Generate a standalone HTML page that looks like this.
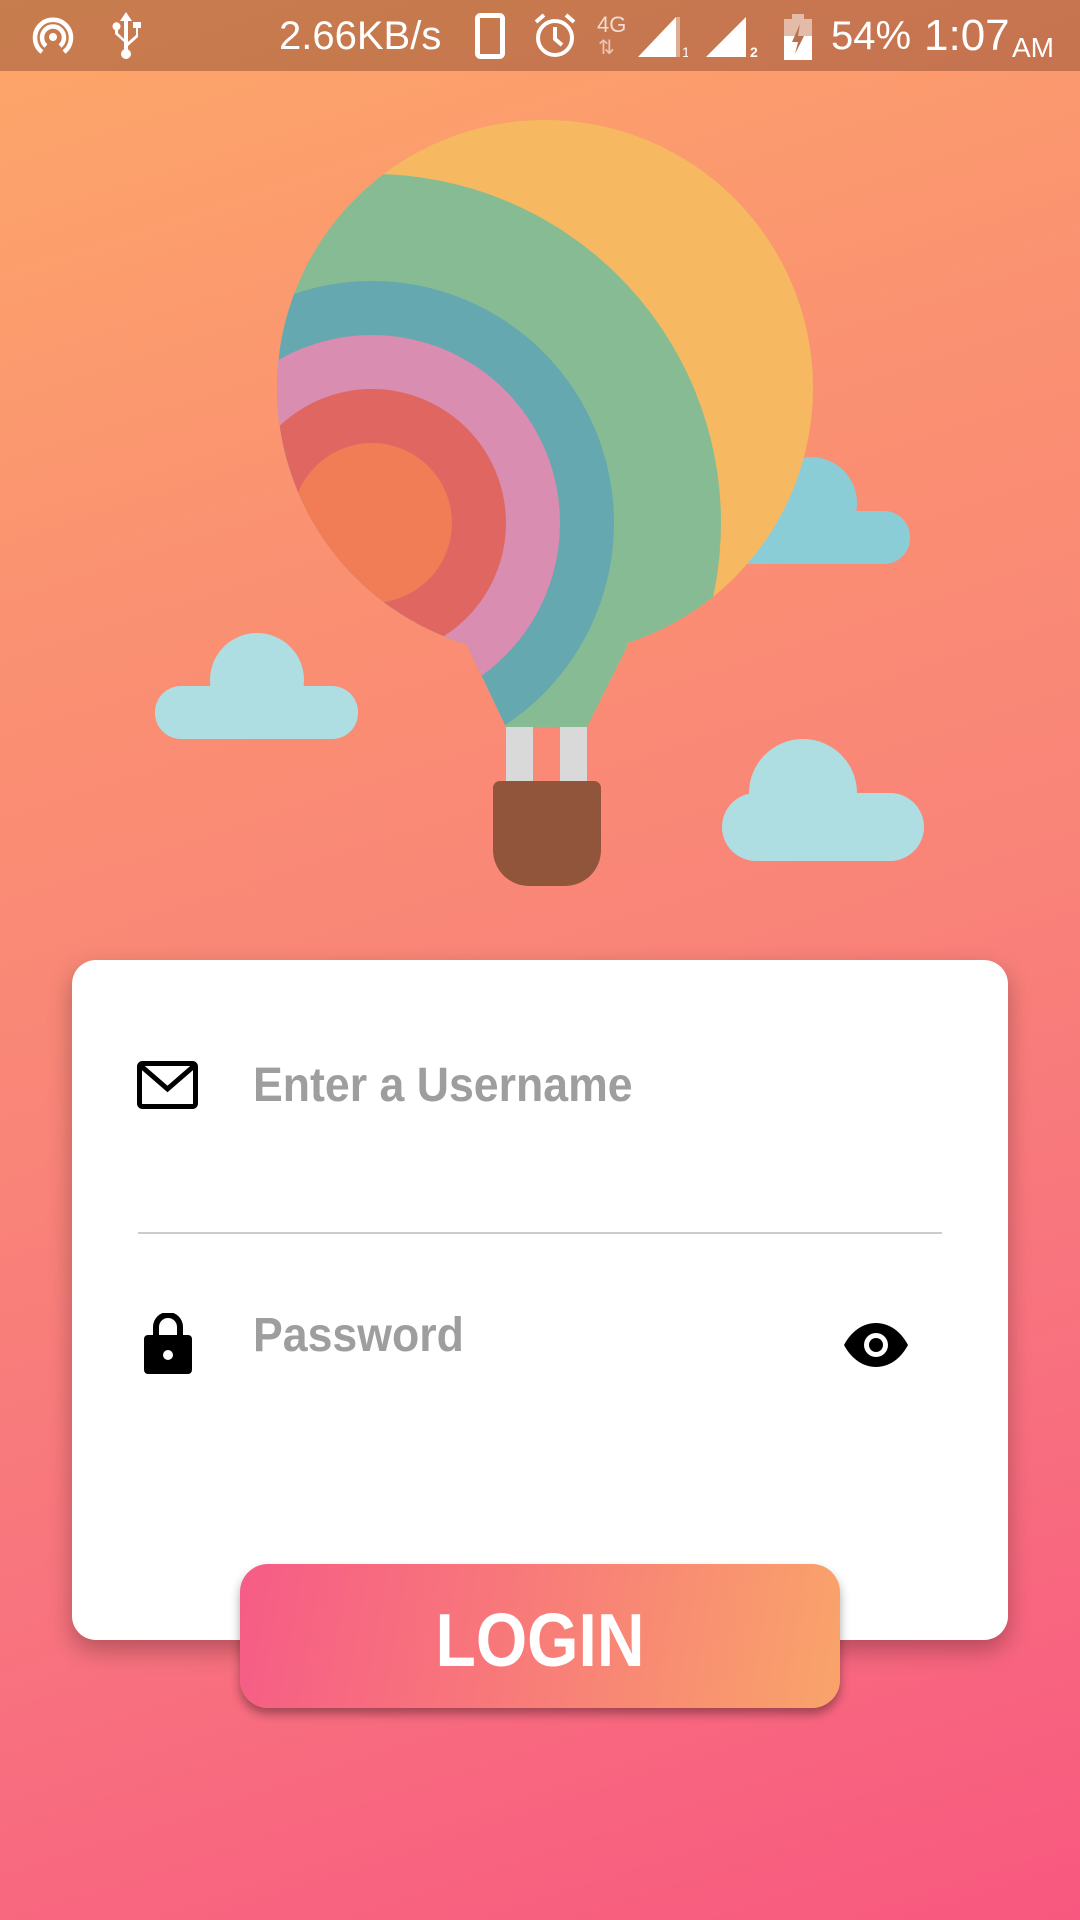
<!DOCTYPE html>
<html><head><meta charset="utf-8">
<style>
html,body{margin:0;padding:0;}
body{width:1080px;height:1920px;position:relative;overflow:hidden;font-family:"Liberation Sans",sans-serif;
background:linear-gradient(162deg,#FDA769 0%,#FA9072 30%,#F98578 50%,#F8717F 75%,#F8587F 100%);}
.status{position:absolute;left:0;top:0;width:1080px;height:71px;background:rgba(90,40,20,0.33);color:#fff;}
.status span{position:absolute;top:14px;font-size:40px;line-height:44px;}
.card{position:absolute;left:72px;top:960px;width:936px;height:680px;background:#fff;border-radius:24px;box-shadow:0 10px 24px rgba(0,0,0,0.28);}
.ph{position:absolute;color:#9E9E9E;font-weight:bold;font-size:48px;transform-origin:left top;transform:scaleX(0.93);white-space:nowrap;}
.btn{position:absolute;left:240px;top:1564px;width:600px;height:144px;border-radius:28px;
background:linear-gradient(100deg,#F65C86 0%,#F8797A 45%,#F9A46A 100%);box-shadow:0 6px 10px rgba(0,0,0,0.35);}
.btn div{position:absolute;left:0;right:0;top:36px;text-align:center;color:#fff;font-weight:bold;font-size:75px;line-height:80px;transform:scaleX(0.88);}
</style></head><body>
<div class="status">
<svg style="position:absolute;left:30px;top:14px" width="46" height="46" viewBox="0 0 46 46" fill="none" stroke="#fff" stroke-width="4.5">
<path d="M12 38 A18 18 0 1 1 34 38"/><path d="M16 32 A11 11 0 1 1 30 32"/><circle cx="23" cy="23" r="4" fill="#fff" stroke="none"/></svg>
<svg style="position:absolute;left:108px;top:12px" width="36" height="48" viewBox="0 0 36 48" fill="#fff">
<path d="M18 0 L24 9 H20 V30 L28 23 V16 H25 V10 H33 V16 H30 V25 L20 34 V38 H16 V30 L7 22 V18 A4 4 0 1 1 10 18 V21 L16 27 V9 H12 Z"/><circle cx="18" cy="42" r="5"/></svg>
<span style="left:279px">2.66KB/s</span>
<svg style="position:absolute;left:475px;top:13px" width="30" height="46" viewBox="0 0 30 46"><rect x="2.5" y="2.5" width="25" height="41" rx="3" fill="none" stroke="#fff" stroke-width="5"/></svg>
<svg style="position:absolute;left:532px;top:11px" width="46" height="48" viewBox="0 0 46 48" fill="none" stroke="#fff" stroke-width="4">
<circle cx="23" cy="27" r="17"/><path d="M23 16 V28 L30 34"/><path d="M4 11 L12 4 M42 11 L34 4"/></svg>
<span style="left:597px;top:14px;font-size:22px;line-height:22px;opacity:.75">4G</span>
<span style="left:598px;top:38px;font-size:20px;line-height:20px;opacity:.6">⇅</span>
<svg style="position:absolute;left:638px;top:17px" width="50" height="40"><path d="M0 40 L38 0 V40 Z" fill="#fff"/><path d="M38 0 L42 0 V40 H38Z" fill="rgba(255,255,255,.4)"/><text x="44" y="40" font-size="14" fill="#fff" font-family="Liberation Sans">1</text></svg>
<svg style="position:absolute;left:706px;top:17px" width="56" height="40"><path d="M0 40 L40 0 V40 Z" fill="#fff"/><text x="44" y="40" font-size="14" fill="#fff" font-family="Liberation Sans" font-weight="bold">2</text></svg>
<svg style="position:absolute;left:784px;top:14px" width="28" height="46"><rect x="8" y="0" width="12" height="5" fill="rgba(255,255,255,.5)"/><rect x="0" y="5" width="28" height="41" fill="rgba(255,255,255,.5)"/><rect x="0" y="22" width="28" height="24" fill="#fff"/><path d="M16 10 L8 28 H14 L11 40 L20 22 H14 Z" fill="#B87050"/></svg>
<span style="left:831px">54%</span>
<span style="left:924px;font-size:44px">1:07</span><span style="left:1012px;top:26px;font-size:28px">AM</span>
</div>

<svg style="position:absolute;left:0;top:0" width="1080" height="960" viewBox="0 0 1080 960">
<defs><clipPath id="bal"><circle cx="545" cy="388" r="268"/><polygon points="467,645 506,727 587,727 628,645 545,600"/></clipPath></defs>
<g fill="#8BCDD6"><circle cx="811" cy="503" r="46"/><rect x="720" y="511" width="190" height="53" rx="26"/></g>
<g clip-path="url(#bal)">
<rect x="200" y="100" width="700" height="700" fill="#F6B962"/>
<circle cx="372" cy="523" r="349" fill="#87BB93"/>
<circle cx="372" cy="523" r="242" fill="#65A8B0"/>
<circle cx="372" cy="523" r="188" fill="#D98DB0"/>
<circle cx="372" cy="523" r="134" fill="#E06662"/>
<circle cx="372" cy="523" r="80" fill="#F07D55"/>
</g>
<g fill="#D9D9D9"><rect x="506" y="727" width="27" height="55"/><rect x="560" y="727" width="27" height="55"/></g>
<path d="M500 781 H594 A7 7 0 0 1 601 788 V850 A36 36 0 0 1 565 886 H529 A36 36 0 0 1 493 850 V788 A7 7 0 0 1 500 781 Z" fill="#91553C"/>
<g fill="#AEDEE2"><circle cx="257" cy="680" r="47"/><rect x="155" y="686" width="203" height="53" rx="26"/>
<circle cx="803" cy="793" r="54"/><rect x="722" y="793" width="202" height="68" rx="34"/></g>
</svg>

<div class="card">
<svg style="position:absolute;left:65px;top:101px" width="61" height="48" viewBox="0 0 61 48" fill="none" stroke="#000" stroke-width="5"><rect x="2.5" y="2.5" width="56" height="43" rx="3"/><path d="M4 5 L30.5 28 L57 5"/></svg>
<div class="ph" style="left:181px;top:98px">Enter a Username</div>
<div style="position:absolute;left:66px;top:272px;width:804px;height:2px;background:#CCCCCC"></div>
<svg style="position:absolute;left:72px;top:353px" width="48" height="61" viewBox="0 0 48 61"><path d="M12 24 V14 A12 12 0 0 1 36 14 V24" fill="none" stroke="#000" stroke-width="6"/><rect x="0" y="22" width="48" height="39" rx="4" fill="#000"/><circle cx="24" cy="42" r="5" fill="#fff"/></svg>
<div class="ph" style="left:181px;top:348px">Password</div>
<svg style="position:absolute;left:770px;top:362px" width="68" height="46" viewBox="0 0 68 46"><path d="M2 23 C10 8 22 1 34 1 C46 1 58 8 66 23 C58 38 46 45 34 45 C22 45 10 38 2 23 Z" fill="#000"/><circle cx="34" cy="23" r="12" fill="#fff"/><circle cx="34" cy="23" r="7" fill="#000"/></svg>
</div>
<div class="btn"><div>LOGIN</div></div>
</body></html>
